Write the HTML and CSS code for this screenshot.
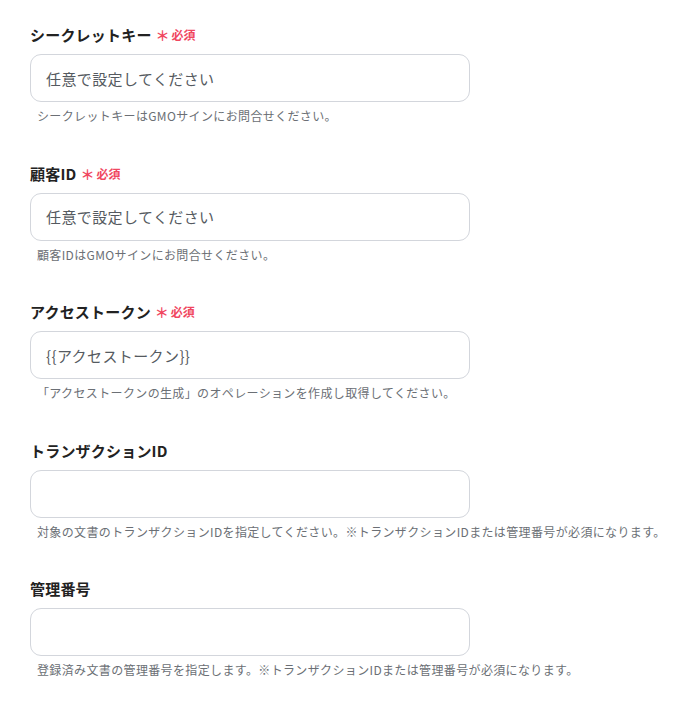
FILE: index.html
```html
<!DOCTYPE html>
<html lang="ja">
<head>
<meta charset="utf-8">
<link rel="stylesheet" href="styles.css">
</head>
<body>
<div class="form">
  <div class="field">
    <div class="label">シークレットキー<span class="req"><span class="ast">＊</span>必須</span></div>
    <div class="input"><span class="ph">任意で設定してください</span></div>
    <div class="help">シークレットキーはGMOサインにお問合せください。</div>
  </div>
  <div class="field">
    <div class="label">顧客ID<span class="req"><span class="ast">＊</span>必須</span></div>
    <div class="input"><span class="ph">任意で設定してください</span></div>
    <div class="help">顧客IDはGMOサインにお問合せください。</div>
  </div>
  <div class="field">
    <div class="label">アクセストークン<span class="req"><span class="ast">＊</span>必須</span></div>
    <div class="input"><span class="val">{{アクセストークン}}</span></div>
    <div class="help">「アクセストークンの生成」のオペレーションを作成し取得してください。</div>
  </div>
  <div class="field">
    <div class="label">トランザクションID</div>
    <div class="input"></div>
    <div class="help">対象の文書のトランザクションIDを指定してください。※トランザクションIDまたは管理番号が必須になります。</div>
  </div>
  <div class="field">
    <div class="label">管理番号</div>
    <div class="input"></div>
    <div class="help">登録済み文書の管理番号を指定します。※トランザクションIDまたは管理番号が必須になります。</div>
  </div>
</div>
</body>
</html>
```
FILE: styles.css
```css
html, body {
  margin: 0;
  padding: 0;
  background: #ffffff;
}
body {
  font-family: "Noto Sans CJK JP", "Noto Sans", sans-serif;
  color: #2b2b2b;
}
.form {
  padding: 24px 0 0 30px;
  display: flex;
  flex-direction: column;
  gap: 36.5px;
}
.field {
  display: flex;
  flex-direction: column;
}
.label {
  font-size: 15px;
  font-weight: 700;
  line-height: 22px;
  height: 22px;
  display: flex;
  align-items: center;
  color: #222222;
  letter-spacing: 0.2px;
}
.req {
  display: inline-flex;
  align-items: center;
  margin-left: 4px;
  color: #f0475f;
  font-size: 12px;
  font-weight: 700;
  letter-spacing: 0;
}
.ast {
  font-size: 14px;
  margin-right: 2px;
}
.input {
  margin-top: 8px;
  width: 440px;
  height: 48px;
  box-sizing: border-box;
  border: 1px solid #d3d6dc;
  border-radius: 11px;
  padding: 0 15px;
  display: flex;
  align-items: center;
  font-size: 15px;
  letter-spacing: 0.4px;
}
.ph {
  color: #555a60;
}
.val {
  color: #555a60;
}
.help {
  margin-top: 4px;
  padding-left: 7px;
  font-size: 12px;
  line-height: 20px;
  color: #6b6f75;
  white-space: nowrap;
  letter-spacing: 0.36px;
}
```
